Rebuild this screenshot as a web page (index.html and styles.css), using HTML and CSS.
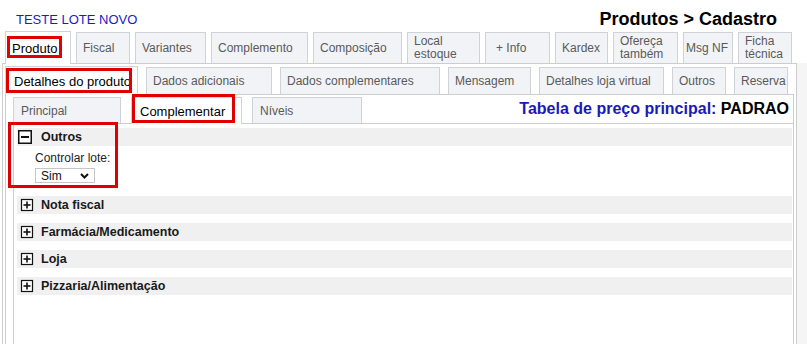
FILE: index.html
```html
<!DOCTYPE html>
<html lang="pt-BR">
<head>
  <meta charset="UTF-8">
  <meta name="viewport" content="width=device-width, initial-scale=1.0">
  <title>Produtos - Cadastro</title>
  <link rel="stylesheet" href="styles.css">
</head>
<body>
<div class="page">

  <div class="top">
    <span class="doc-name">TESTE LOTE NOVO</span>
    <h1>Produtos &gt; Cadastro</h1>
  </div>

  <!-- abas principais -->
  <ul class="tabs tabs1">
    <li class="active w66">Produto</li>
    <li class="w54">Fiscal</li>
    <li class="w71">Variantes</li>
    <li class="w97">Complemento</li>
    <li class="w89">Composição</li>
    <li class="w73 two">Local estoque</li>
    <li class="w65 info">+ Info</li>
    <li class="w53">Kardex</li>
    <li class="w65 two">Ofereça também</li>
    <li class="w50 msg">Msg NF</li>
    <li class="w54 two">Ficha técnica</li>
  </ul>

  <div class="content">
    <div class="panel1">

      <ul class="tabs tabs2">
        <li class="active w133">Detalhes do produto</li>
        <li class="w126">Dados adicionais</li>
        <li class="w160">Dados complementares</li>
        <li class="w83">Mensagem</li>
        <li class="w125">Detalhes loja virtual</li>
        <li class="w54">Outros</li>
        <li class="w54">Reserva</li>
      </ul>

      <div class="panel2">
        <div class="tabs3-row">
          <ul class="tabs tabs3">
            <li class="w108">Principal</li>
            <li class="active w111">Complementar</li>
            <li class="w110">Níveis</li>
          </ul>
          <div class="price-table"><span class="lbl">Tabela de preço principal:</span> PADRAO</div>
        </div>

        <div class="panel3">
          <div class="group">
            <div class="group-head">
              <svg class="toggle" width="16" height="14" viewBox="0 0 16 14">
                <rect x="0.75" y="0.75" width="12.5" height="12.5" fill="#fff" stroke="#111" stroke-width="1.5"/>
                <line x1="3" y1="7" x2="11" y2="7" stroke="#111" stroke-width="2"/>
              </svg>
              Outros
            </div>
            <div class="group-body">
              <label>Controlar lote:</label>
              <div class="select">
                <span>Sim</span>
                <svg width="9" height="6" viewBox="0 0 9 6"><polyline points="1,1 4.5,4.5 8,1" fill="none" stroke="#111" stroke-width="2"/></svg>
              </div>
            </div>
          </div>

          <div class="group">
            <div class="group-head">
              <svg class="toggle" width="16" height="14" viewBox="0 0 16 14">
                <rect x="3.5" y="1.5" width="11" height="11" fill="#fff" stroke="#111" stroke-width="1.2"/>
                <line x1="5.5" y1="7" x2="12.5" y2="7" stroke="#111" stroke-width="1.6"/>
                <line x1="9" y1="3.5" x2="9" y2="10.5" stroke="#111" stroke-width="1.6"/>
              </svg>
              Nota fiscal
            </div>
          </div>

          <div class="group">
            <div class="group-head">
              <svg class="toggle" width="16" height="14" viewBox="0 0 16 14">
                <rect x="3.5" y="1.5" width="11" height="11" fill="#fff" stroke="#111" stroke-width="1.2"/>
                <line x1="5.5" y1="7" x2="12.5" y2="7" stroke="#111" stroke-width="1.6"/>
                <line x1="9" y1="3.5" x2="9" y2="10.5" stroke="#111" stroke-width="1.6"/>
              </svg>
              Farmácia/Medicamento
            </div>
          </div>

          <div class="group">
            <div class="group-head">
              <svg class="toggle" width="16" height="14" viewBox="0 0 16 14">
                <rect x="3.5" y="1.5" width="11" height="11" fill="#fff" stroke="#111" stroke-width="1.2"/>
                <line x1="5.5" y1="7" x2="12.5" y2="7" stroke="#111" stroke-width="1.6"/>
                <line x1="9" y1="3.5" x2="9" y2="10.5" stroke="#111" stroke-width="1.6"/>
              </svg>
              Loja
            </div>
          </div>

          <div class="group">
            <div class="group-head">
              <svg class="toggle" width="16" height="14" viewBox="0 0 16 14">
                <rect x="3.5" y="1.5" width="11" height="11" fill="#fff" stroke="#111" stroke-width="1.2"/>
                <line x1="5.5" y1="7" x2="12.5" y2="7" stroke="#111" stroke-width="1.6"/>
                <line x1="9" y1="3.5" x2="9" y2="10.5" stroke="#111" stroke-width="1.6"/>
              </svg>
              Pizzaria/Alimentação
            </div>
          </div>
        </div>
      </div>

    </div>
  </div>

  <!-- marcações em vermelho -->
  <div class="mark mark-produto"></div>
  <div class="mark mark-detalhes"></div>
  <div class="mark mark-complementar"></div>
  <div class="mark mark-outros"></div>

</div>
</body>
</html>
```

FILE: styles.css
```css
body {
  margin: 0;
  padding: 0;
  font-family: "Liberation Sans", Arial, sans-serif;
  background-color: #fff;
  color: #111;
}

.page {
  position: relative;
  width: 807px;
  height: 344px;
  overflow: hidden;
}

.top {
  height: 32px;
  display: flex;
  justify-content: space-between;
  align-items: flex-start;
  padding: 0 30px 0 16px;
}

.doc-name {
  color: #1c1cc4;
  font-size: 13px;
  margin-top: 12px;
}

.top h1 {
  margin: 9px 0 0 0;
  font-size: 18px;
  font-weight: bold;
  color: #000;
}

/* abas */
.tabs {
  list-style: none;
  margin: 0;
  padding: 0;
  display: flex;
  align-items: flex-end;
}

.tabs li {
  box-sizing: border-box;
  border: 1px solid #cfd3d8;
  border-bottom: none;
  background-color: #f1f3f6;
  color: #5a5a5a;
  font-size: 12px;
  padding-left: 6px;
  display: flex;
  align-items: center;
  white-space: nowrap;
}

.tabs li.active {
  position: relative;
  background-color: #fff;
  color: #000;
  font-size: 13px;
  margin-bottom: -1px;
  z-index: 1;
}

.tabs li.two {
  white-space: normal;
  line-height: 13px;
}

.tabs li.info {
  padding-left: 10px;
}

.tabs li.msg {
  padding-left: 2px;
}

.tabs1 {
  height: 31px;
  gap: 5px;
  margin-left: 5px;
}

.tabs1 li {
  height: 31px;
}

.tabs1 li.active {
  height: 33px;
}

.tabs2 {
  height: 27px;
  gap: 8px;
}

.tabs2 li {
  height: 27px;
}

.tabs2 li.active {
  height: 29px;
  padding-left: 8px;
}

.tabs3 {
  height: 26px;
  gap: 10px;
  margin-left: 7px;
}

.tabs3 li {
  height: 26px;
  padding-left: 7px;
}

.tabs3 li.active {
  height: 27px;
  padding-left: 8px;
}

/* larguras das abas */
.w50 { width: 50px; }
.w53 { width: 53px; }
.w54 { width: 54px; }
.w65 { width: 65px; }
.w66 { width: 66px; }
.w71 { width: 71px; }
.w73 { width: 73px; }
.w83 { width: 83px; }
.w89 { width: 89px; }
.w97 { width: 97px; }
.w108 { width: 108px; }
.w110 { width: 110px; }
.w111 { width: 111px; }
.w125 { width: 125px; }
.w126 { width: 126px; }
.w133 { width: 133px; }
.w160 { width: 160px; }

/* paineis */
.content {
  background: linear-gradient(to right, #fff 797px, #f5f5f5 797px);
}

.panel1 {
  margin-left: 2px;
  width: 795px;
  box-sizing: border-box;
  border: 1px solid #cdcdcd;
  border-bottom: none;
  padding: 3px 2px 0 2px;
  background-color: #fff;
}

.panel2 {
  border: 1px solid #cdcdcd;
  border-bottom: none;
  padding-top: 2px;
}

.tabs3-row {
  display: flex;
  justify-content: space-between;
  align-items: flex-end;
}

.price-table {
  font-size: 16px;
  font-weight: bold;
  color: #000;
  padding: 0 4px 5px 0;
}

.price-table .lbl {
  color: #1a1ab8;
}

.panel3 {
  margin-left: 7px;
  border-top: 1px solid #cdcdcd;
  border-left: 1px solid #cdcdcd;
  padding: 4px 1px 0 3px;
  min-height: 240px;
}

/* grupos */
.group {
  margin-bottom: 9px;
}

.group-head {
  height: 18px;
  background-color: #f0f0f0;
  display: flex;
  align-items: center;
  font-size: 12.5px;
  font-weight: bold;
  color: #1a1a1a;
}

.toggle {
  margin: 0 7px 0 1px;
}

.group-body {
  padding: 5px 0 4px 18px;
}

.group-body label {
  display: block;
  font-size: 12px;
  line-height: 14px;
  color: #222;
}

.select {
  margin-top: 3px;
  box-sizing: border-box;
  width: 60px;
  height: 15px;
  border: 1px solid #c6c6c6;
  display: flex;
  align-items: center;
  justify-content: space-between;
  padding: 0 5px 0 5px;
  font-size: 12px;
  color: #111;
}

/* marcações */
.mark {
  position: absolute;
  box-sizing: border-box;
  border: 3px solid #e00000;
  z-index: 5;
}

.mark-produto {
  left: 7px;
  top: 36px;
  width: 55px;
  height: 22px;
}

.mark-detalhes {
  left: 6px;
  top: 68px;
  width: 126px;
  height: 25px;
}

.mark-complementar {
  left: 132px;
  top: 94px;
  width: 103px;
  height: 29px;
}

.mark-outros {
  left: 8px;
  top: 122px;
  width: 110px;
  height: 66px;
}
```
